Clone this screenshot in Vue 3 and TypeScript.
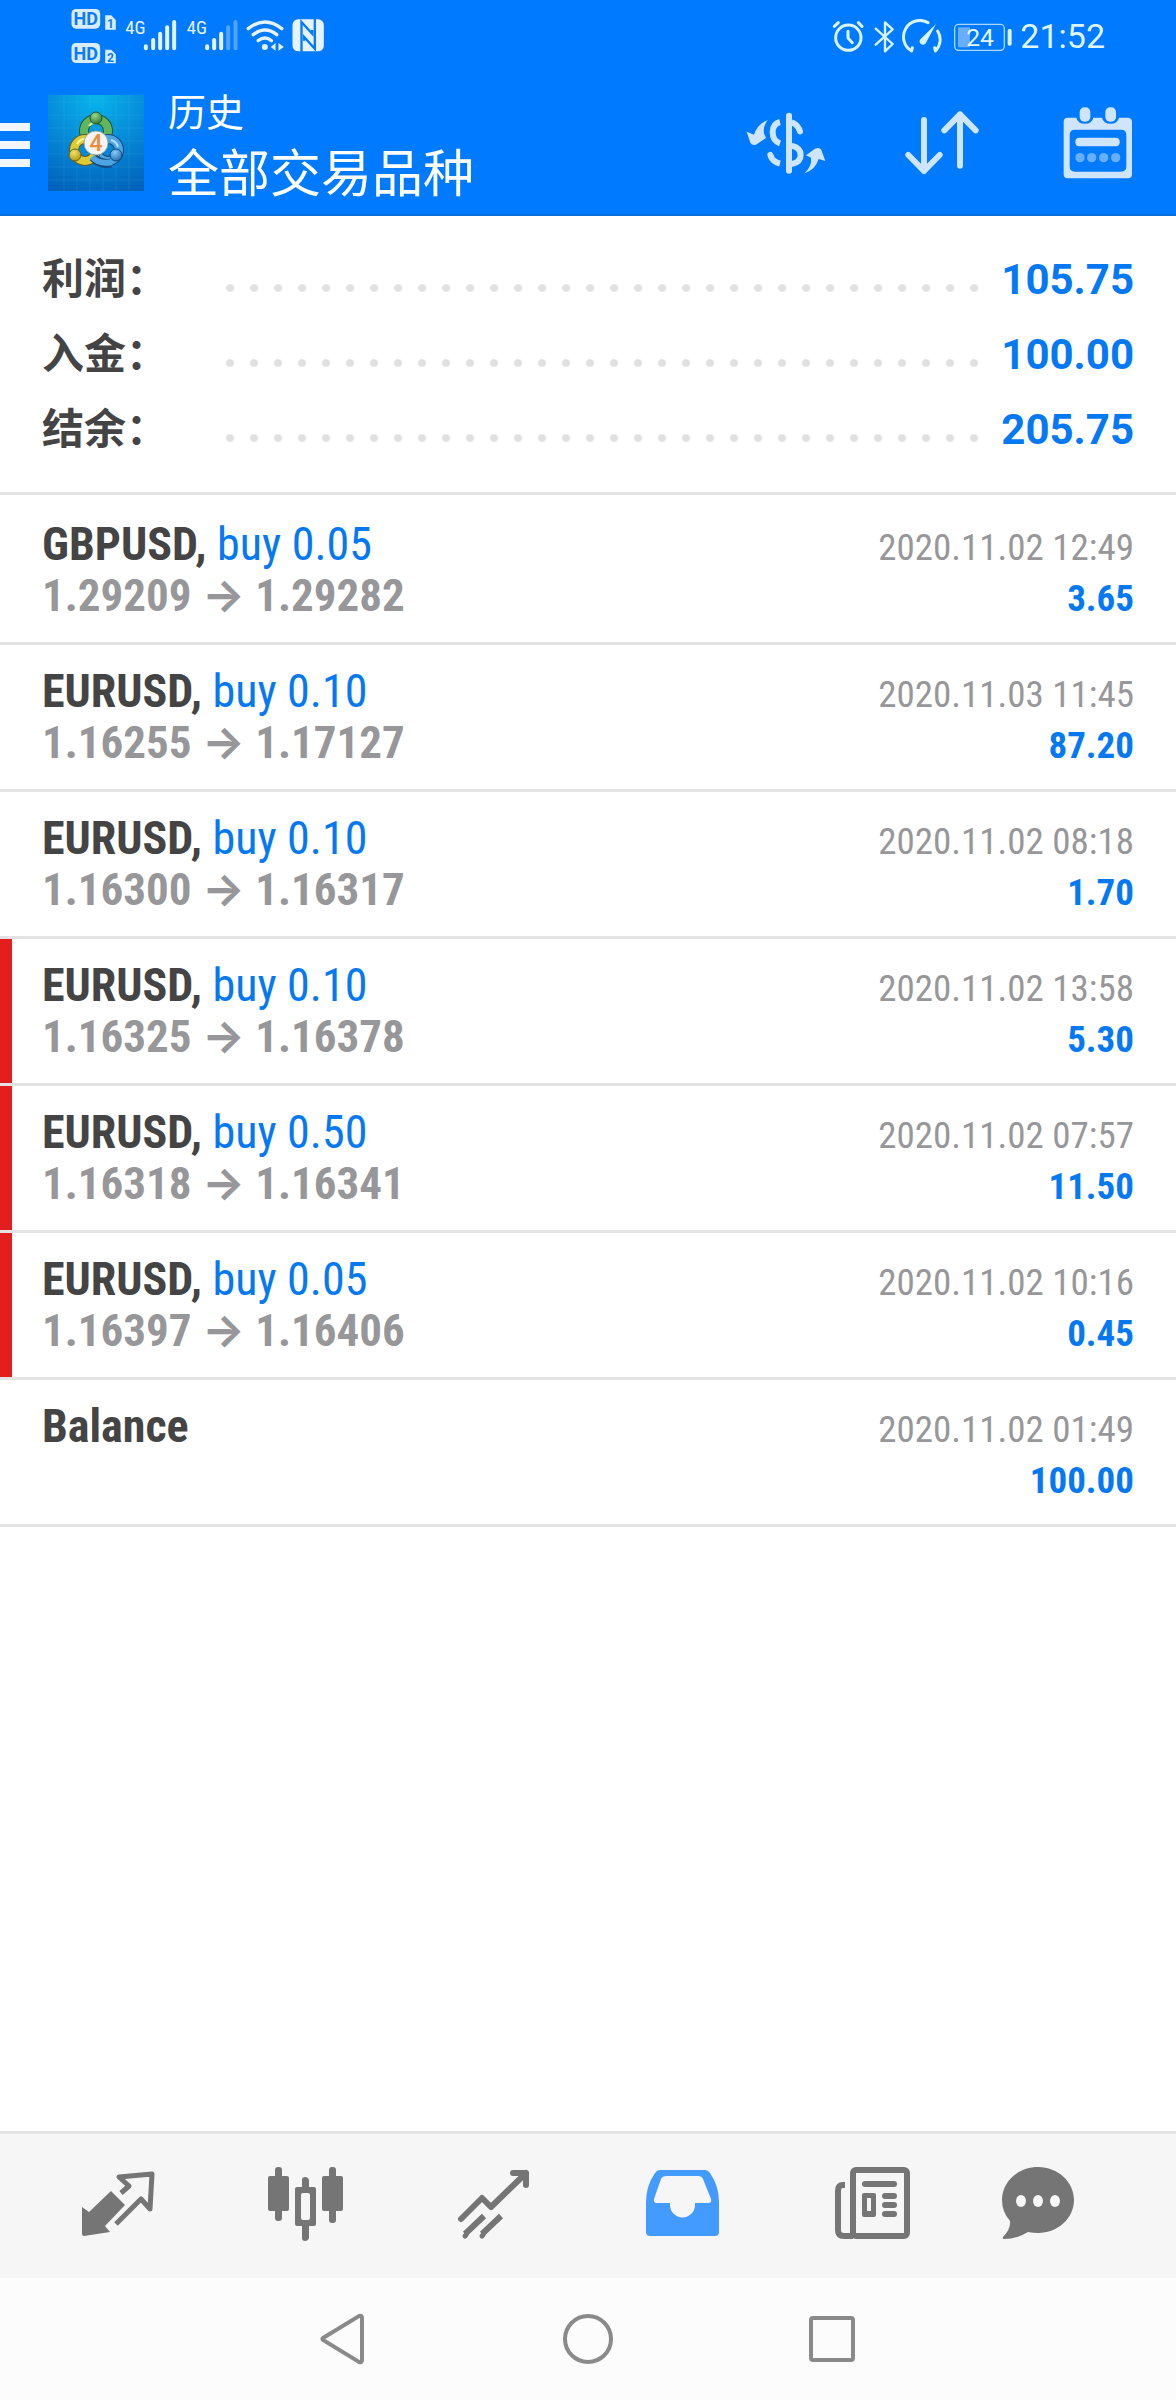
<script setup lang="ts">
interface Deal {
  symbol: string
  side?: string
  open?: string
  close?: string
  time: string
  profit: string
  flagged?: boolean
}

const totals: { label: string; value: string }[] = [
  { label: '利润：', value: '105.75' },
  { label: '入金：', value: '100.00' },
  { label: '结余：', value: '205.75' },
]

const deals: Deal[] = [
  { symbol: 'GBPUSD', side: 'buy 0.05', open: '1.29209', close: '1.29282', time: '2020.11.02 12:49', profit: '3.65' },
  { symbol: 'EURUSD', side: 'buy 0.10', open: '1.16255', close: '1.17127', time: '2020.11.03 11:45', profit: '87.20' },
  { symbol: 'EURUSD', side: 'buy 0.10', open: '1.16300', close: '1.16317', time: '2020.11.02 08:18', profit: '1.70' },
  { symbol: 'EURUSD', side: 'buy 0.10', open: '1.16325', close: '1.16378', time: '2020.11.02 13:58', profit: '5.30', flagged: true },
  { symbol: 'EURUSD', side: 'buy 0.50', open: '1.16318', close: '1.16341', time: '2020.11.02 07:57', profit: '11.50', flagged: true },
  { symbol: 'EURUSD', side: 'buy 0.05', open: '1.16397', close: '1.16406', time: '2020.11.02 10:16', profit: '0.45', flagged: true },
  { symbol: 'Balance', time: '2020.11.02 01:49', profit: '100.00' },
]
</script>

<template>
  <div class="screen">
    <header class="top">
      <div class="status">
        <svg class="status-left" viewBox="210 20 770 180" aria-hidden="true">
          <g fill="#d8ecff">
            <rect x="214" y="29" width="86" height="59" rx="14" />
            <rect x="214" y="131" width="86" height="60" rx="14" />
            <path d="M315 48H333L347 62V91H315Z" />
            <path d="M315 151H333L347 165V192H315Z" />
          </g>
          <g class="svg-text" fill="#0b7bf7" font-weight="700" text-anchor="middle">
            <text x="257" y="78" font-size="54">HD</text>
            <text x="257" y="181" font-size="54">HD</text>
            <text x="331" y="87" font-size="36">1</text>
            <text x="331" y="189" font-size="36">2</text>
          </g>
          <g class="svg-narrow" fill="#e6f3ff" text-anchor="middle">
            <text x="406" y="103" font-size="56">4G</text>
            <text x="590" y="103" font-size="56">4G</text>
          </g>
          <g stroke="#e6f3ff" stroke-width="12" stroke-linecap="round">
            <path d="M437 141V147M459 122V147M480 103V147M501 84V147M522 68V147" />
            <path d="M621 141V147M642 122V147M663 103V147" />
            <path d="M684 84V147M706 68V147" opacity=".35" />
          </g>
          <g fill="none" stroke="#e6f3ff" stroke-width="10" stroke-linecap="round">
            <path d="M744 88Q795 48 845 88" />
            <path d="M759 106Q795 78 830 106" />
            <path d="M774 124Q795 108 814 124" />
          </g>
          <g fill="#e6f3ff">
            <circle cx="794" cy="143" r="9" />
            <path d="M826 131V154L812 143ZM835 131V154L851 143Z" />
            <rect x="877" y="60" width="94" height="96" rx="17" />
          </g>
          <path d="M904 157V68L936 103V92M944 59V148L912 113V124" fill="none" stroke="#007aff" stroke-width="7" />
        </svg>
        <div class="status-right">
          <svg class="status-icons" viewBox="396 55 546 105" aria-hidden="true">
            <g fill="none" stroke="#d9f4ff" stroke-width="9" stroke-linecap="round" stroke-linejoin="round">
              <circle cx="445" cy="111" r="38" />
              <path d="M444 92V112L457 126M403 77L415 66M475 66L486 77" />
              <path d="M527 84L578 130L555 152V65L578 86L527 132" stroke-width="7" />
              <path d="M684 66A48 48 0 0 0 635 151L637 141M713 91A48 48 0 0 1 706 151L704 141" />
            </g>
            <path d="M708 70L678 126A10 10 0 1 1 661 116Z" fill="#d9f4ff" />
            <rect x="774" y="80" width="36" height="60" fill="#69adff" />
            <rect x="764" y="71" width="149" height="78" rx="12" fill="none" stroke="#a9d6ff" stroke-width="4" />
            <rect x="923" y="85" width="12" height="50" rx="5" fill="#d9f4ff" />
            <text class="svg-text" x="840" y="135" font-size="74" fill="#e6f8ff" text-anchor="middle">24</text>
          </svg>
          <time class="clock">21:52</time>
        </div>
      </div>

      <div class="appbar">
        <button class="menu" type="button" aria-label="菜单">
          <span></span><span></span><span></span>
        </button>
        <svg class="logo" viewBox="0 0 96 96" aria-hidden="true">
          <defs>
            <radialGradient id="bg" cx=".5" cy="0" r="1.05">
              <stop offset="0" stop-color="#06b6ec" />
              <stop offset=".5" stop-color="#078bd8" />
              <stop offset="1" stop-color="#0163bb" />
            </radialGradient>
            <radialGradient id="green" cx=".4" cy=".3" r=".8">
              <stop offset="0" stop-color="#9ad88c" />
              <stop offset="1" stop-color="#25702f" />
            </radialGradient>
            <radialGradient id="yellow" cx=".4" cy=".3" r=".8">
              <stop offset="0" stop-color="#f3e35e" />
              <stop offset="1" stop-color="#a88c12" />
            </radialGradient>
            <radialGradient id="blue" cx=".4" cy=".3" r=".8">
              <stop offset="0" stop-color="#8bcbf5" />
              <stop offset="1" stop-color="#1667ae" />
            </radialGradient>
          </defs>
          <rect width="96" height="96" fill="url(#bg)" />
          <path d="M16 0V96M29 0V96M42 0V96M55 0V96M68 0V96M81 0V96M0 7H96M0 20H96M0 33H96M0 46H96M0 59H96M0 72H96M0 85H96" stroke="#5cc4f5" stroke-width="1" opacity=".15" />
          <g fill="none">
            <circle cx="48" cy="36" r="12" stroke="#1f5b33" stroke-width="10" />
            <circle cx="48" cy="36" r="12" stroke="#63b55b" stroke-width="8" />
            <circle cx="60" cy="55" r="11" stroke="#14477d" stroke-width="10" />
            <circle cx="60" cy="55" r="11" stroke="#4ca5e2" stroke-width="8" />
            <circle cx="37" cy="55" r="11" stroke="#5b5d22" stroke-width="10" />
            <circle cx="37" cy="55" r="11" stroke="#dccb35" stroke-width="8" />
            <path d="M45 62Q52 70 63 68" stroke="#14477d" stroke-width="9" />
            <path d="M44 62Q52 70 64 67" stroke="#4ca5e2" stroke-width="6" />
            <path d="M41 31Q43 28 47 28" stroke="#c5f0b5" stroke-width="2" />
            <path d="M29 49Q32 44 37 44" stroke="#fff6a0" stroke-width="2" />
            <path d="M63 45Q69 47 70 52" stroke="#b5e3ff" stroke-width="2" />
          </g>
          <circle cx="48" cy="23" r="6" fill="url(#green)" stroke="#1f5b33" />
          <circle cx="27" cy="60" r="6" fill="url(#yellow)" stroke="#6d6118" />
          <circle cx="68" cy="60" r="6" fill="url(#blue)" stroke="#14477d" />
          <circle cx="48" cy="48" r="12" fill="#f6f4f2" stroke="#90a8b0" stroke-width="1" />
          <text class="svg-text" x="48" y="56" font-size="23" font-weight="500" fill="#f08a3c" text-anchor="middle">4</text>
        </svg>
        <div class="titles">
          <span class="caption">历史</span>
          <h1>全部交易品种</h1>
        </div>
        <button class="action" type="button" aria-label="交易品种">
          <svg width="80" height="62" viewBox="138 333 240 186">
            <g fill="#cfe5fd">
              <path d="M203 357Q182 388 198 411L168 431Q157 435 151 425L140 392L162 401Q172 370 203 357Z" />
              <path d="M313 517Q337 494 333 470L318 463L345 443Q359 438 364 447L376 480L356 474Q346 507 313 517Z" />
            </g>
            <g fill="none" stroke="#cfe5fd" stroke-width="18">
              <path d="M240 363Q218 368 218 394Q218 420 240 427" />
              <path d="M275 364Q290 368 299 387M275 434Q302 440 302 462Q302 484 275 489" />
              <path d="M240 488Q218 482 212 465" />
              <path d="M267 344V509M299 388L300 391M212 464L211 462" stroke-linecap="round" />
            </g>
          </svg>
        </button>
        <button class="action" type="button" aria-label="排序">
          <svg width="76" height="66" viewBox="612 332 228 198">
            <path d="M672 362V515M625 467L672 515L719 467M780 499V345M733 393L780 345L827 393" fill="none" stroke="#cfe5fd" stroke-width="18" stroke-linecap="round" stroke-linejoin="round" />
          </svg>
        </button>
        <button class="action" type="button" aria-label="日期">
          <svg width="72" height="74" viewBox="1087 318 216 222">
            <path fill="#cfe5fd" fill-rule="evenodd" d="M1104 353H1130Q1134 371 1156 371Q1177 371 1181 353H1207Q1211 371 1233 371Q1254 371 1258 353H1286Q1297 354 1297 366V523Q1297 535 1285 535H1104Q1092 535 1092 523V366Q1092 353 1104 353ZM1126 389Q1110 389 1110 405V499Q1110 515 1126 515H1264Q1280 515 1280 499V405Q1280 389 1264 389Z" />
            <rect x="1140" y="322" width="32" height="43" rx="14" fill="#cfe5fd" />
            <rect x="1217" y="322" width="32" height="43" rx="14" fill="#cfe5fd" />
            <rect x="1127" y="413" width="133" height="26" rx="12" fill="#cfe5fd" />
            <g fill="#68aefe">
              <circle cx="1141" cy="473" r="14" />
              <circle cx="1176" cy="473" r="14" />
              <circle cx="1212" cy="473" r="14" />
              <circle cx="1248" cy="473" r="14" />
            </g>
          </svg>
        </button>
      </div>
    </header>

    <main class="content">
      <dl class="totals">
        <div v-for="t in totals" :key="t.label" class="total">
          <dt>{{ t.label }}</dt>
          <dd>{{ t.value }}</dd>
        </div>
      </dl>

      <ul class="deals">
        <li v-for="(d, i) in deals" :key="i" class="deal">
          <div class="deal-body" :class="{ flagged: d.flagged }">
            <div class="line">
              <span class="symbol">{{ d.symbol }}<template v-if="d.side">, <span class="side">{{ d.side }}</span></template></span>
              <span class="end"><time>{{ d.time }}</time></span>
            </div>
            <div class="line">
              <span v-if="d.open" class="price">{{ d.open }} <span class="arrow">→</span> {{ d.close }}</span>
              <span class="end"><b>{{ d.profit }}</b></span>
            </div>
          </div>
        </li>
      </ul>
    </main>

    <nav class="tabs">
      <button type="button" aria-label="行情">
        <svg viewBox="0 0 80 80">
          <path d="M43 27L51 20L41 11L74 8L72 43L63 33L38 58" fill="none" stroke="#757575" stroke-width="5" stroke-linejoin="round" />
          <path d="M33 25L47 39L27 60L32 66L6 70Q4 70 4 68V41L11 46Z" fill="#757575" />
        </svg>
      </button>
      <button type="button" aria-label="图表">
        <svg viewBox="0 0 80 80" fill="#757575">
          <rect x="2" y="10" width="21" height="35" rx="2" />
          <rect x="9" y="1" width="7" height="54" rx="3" />
          <path fill-rule="evenodd" d="M31 21H48Q50 21 50 23V58Q50 60 48 60H31Q29 60 29 58V23Q29 21 31 21ZM37 27Q35 27 35 29V52Q35 54 37 54H42Q44 54 44 52V29Q44 27 42 27Z" />
          <path d="M36 22V14Q36 11 39 11T43 14V22ZM36 59V72Q36 75 39 75T43 72V59Z" />
          <rect x="56" y="10" width="21" height="35" rx="2" />
          <rect x="63" y="1" width="7" height="56" rx="3" />
        </svg>
      </button>
      <button type="button" aria-label="交易">
        <svg viewBox="0 0 80 80" fill="none" stroke="#757575" stroke-width="6" stroke-linecap="round" stroke-linejoin="round">
          <path d="M7 53L28 32L37 41L72 7M59 7H72V19" />
          <path d="M11 70L12 69M28 70L29 69" stroke-width="5" />
          <path d="M11 68L30 50M28 68L47 50" stroke-linecap="butt" />
        </svg>
      </button>
      <button type="button" aria-label="历史" aria-current="page">
        <svg viewBox="0 0 80 80">
          <path fill="#449bff" fill-rule="evenodd" d="M18 4H63Q66 4 68 7Q77 20 77 36V66Q77 70 73 70H8Q4 70 4 66V36Q4 20 13 7Q15 4 18 4ZM25 10Q20 10 19 13L12 33Q11 37 15 37H28V39A12 12 0 0 0 53 39V37H66Q70 37 69 33L61 13Q60 10 56 10Z" />
        </svg>
      </button>
      <button type="button" aria-label="新闻">
        <svg viewBox="0 0 80 80">
          <g fill="none" stroke="#757575" stroke-width="6">
            <rect x="23" y="4" width="54" height="66" rx="3" />
            <path d="M15 19H13Q8 19 8 25V64Q8 70 14 70H23" />
          </g>
          <g fill="#757575">
            <rect x="32" y="15" width="35" height="6" rx="3" />
            <path fill-rule="evenodd" d="M34 27H44Q46 27 46 29V49Q46 51 44 51H34Q32 51 32 49V29Q32 27 34 27ZM37 32V45H41V32Z" />
            <rect x="52" y="27" width="15" height="6" rx="3" />
            <rect x="52" y="36" width="15" height="6" rx="3" />
            <rect x="52" y="45" width="15" height="6" rx="3" />
          </g>
        </svg>
      </button>
      <button type="button" aria-label="聊天">
        <svg viewBox="0 0 80 80">
          <path fill="#757575" d="M40 1C60 1 76 16 76 34S60 67 40 67Q35 67 30 66Q19 73 6 73Q4 73 5 71Q13 63 12 55Q4 46 4 34C4 16 20 1 40 1Z" />
          <g fill="#f7f7f7">
            <ellipse cx="23" cy="35" rx="5" ry="6" />
            <ellipse cx="40" cy="35" rx="5" ry="6" />
            <ellipse cx="57" cy="35" rx="5" ry="6" />
          </g>
        </svg>
      </button>
    </nav>

    <footer class="system">
      <button type="button" aria-label="返回">
        <svg viewBox="0 0 56 56"><path d="M8 27L44 5Q47 4 47 7V49Q47 52 44 51L8 29Q7 28 8 27Z" /></svg>
      </button>
      <button type="button" aria-label="主屏幕">
        <svg viewBox="0 0 56 56"><circle cx="28" cy="28" r="23" /></svg>
      </button>
      <button type="button" aria-label="最近任务">
        <svg viewBox="0 0 56 56"><rect x="6" y="7" width="42" height="42" rx="2" /></svg>
      </button>
    </footer>
  </div>
</template>

<style>
body {
  margin: 0;
  background: #fff;
}
</style>

<style scoped>
.screen {
  --blue: #0578f4;
  --sans: Roboto, "Noto Sans CJK SC", sans-serif;
  --narrow: "Roboto Condensed", "Liberation Sans Narrow", Roboto, sans-serif;
  display: flex;
  flex-direction: column;
  min-height: 100vh;
  font-family: var(--sans);
}
button {
  display: flex;
  align-items: center;
  justify-content: center;
  margin: 0;
  padding: 0;
  border: 0;
  background: none;
}
svg {
  display: block;
}
.svg-text {
  font-family: var(--sans);
}
.svg-narrow {
  font-family: var(--narrow);
}
.top {
  background: #007aff;
  color: #fff;
  border-bottom: 2px solid #0a6fdc;
}
.status {
  display: flex;
  justify-content: space-between;
  align-items: center;
  height: 72px;
  padding: 0 71px 0 70px;
}
.status-left {
  width: 257px;
  height: 60px;
}
.status-right {
  display: flex;
  align-items: center;
  gap: 6px;
}
.status-icons {
  width: 182px;
  height: 35px;
}
.clock {
  font-size: 34px;
  line-height: 40px;
  color: #dff5ff;
}
.appbar {
  display: flex;
  align-items: center;
  height: 142px;
}
.menu {
  width: 30px;
  flex-direction: column;
  align-items: stretch;
  gap: 10px;
  margin-right: 18px;
  padding-top: 4px;
}
.menu span {
  height: 8px;
  background: #f0f7ff;
}
.logo {
  width: 96px;
  height: 96px;
}
.titles {
  flex: 1;
  margin-left: 24px;
  font-family: "Noto Sans CJK SC", sans-serif;
}
.caption {
  display: block;
  font-size: 38px;
  line-height: 54px;
}
.titles h1 {
  margin: 0;
  font-size: 51px;
  font-weight: 400;
  line-height: 66px;
}
.action {
  width: 156px;
  height: 142px;
}
.content {
  flex: 1;
}
.totals {
  margin: 0;
  padding: 26px 42px 25px;
  border-bottom: 3px solid #e3e3e3;
}
.total {
  display: flex;
  align-items: center;
  font-size: 42px;
  font-weight: 700;
  line-height: 75px;
}
.total dt {
  width: 176px;
  color: #444;
}
.total dd {
  display: flex;
  flex: 1;
  align-items: center;
  gap: 14px;
  margin: 0;
  color: var(--blue);
}
.total dd::before {
  content: "";
  flex: 1;
  height: 25px;
  background: radial-gradient(circle, #e0e0e0 3px, transparent 5px) 0 100% / 24px 8px repeat-x;
}
.deals {
  margin: 0;
  padding: 3px 0 0;
  list-style: none;
}
.deal {
  border-bottom: 3px solid #e3e3e3;
}
.deal-body {
  padding: 21px 42px 21px 30px;
  border-left: 12px solid transparent;
}
.deal-body.flagged {
  border-left-color: #e31e1e;
}
.line {
  display: flex;
  align-items: baseline;
  height: 51px;
  font-family: var(--narrow);
  font-size: 46px;
  line-height: 51px;
}
.symbol {
  color: #444;
  font-weight: 700;
}
.side {
  color: var(--blue);
  font-weight: 400;
}
.price {
  color: #97979a;
  font-size: 45px;
  font-weight: 700;
}
.arrow {
  font-family: Inter, sans-serif;
  line-height: 1;
}
.end {
  margin-left: auto;
}
.end time,
.end b {
  font-size: 37px;
  line-height: 1;
}
.end time {
  color: #97979a;
}
.end b {
  color: var(--blue);
}
.tabs {
  display: grid;
  grid-template-columns: repeat(5, 188fr) 148fr;
  height: 144px;
  padding: 0 64px 0 24px;
  border-top: 3px solid #e3e3e3;
  background: #f6f6f6;
}
.tabs svg {
  width: 80px;
  height: 80px;
}
.system {
  display: flex;
  justify-content: center;
  height: 122px;
  background: #fcfcfc;
}
.system button {
  width: 245px;
}
.system svg {
  width: 56px;
  height: 56px;
  fill: none;
  stroke: #8a8a8a;
  stroke-width: 4px;
}
</style>
